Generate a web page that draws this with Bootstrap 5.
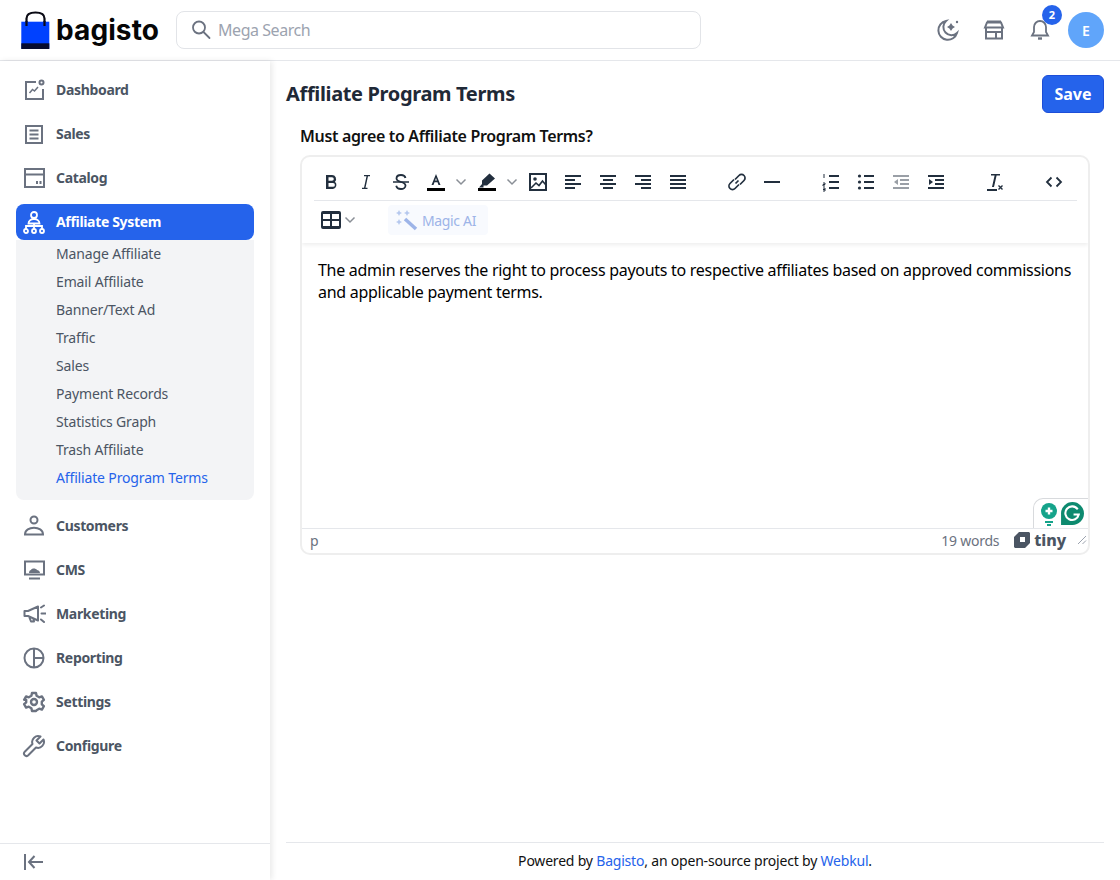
<!DOCTYPE html>
<html lang="en">
<head>
    <meta charset="UTF-8">
    <title>Affiliate Program Terms</title>
    <link href="https://cdn.jsdelivr.net/npm/bootstrap@5.3.0/dist/css/bootstrap.min.css" rel="stylesheet">
    <style>
        html, body { height: 100%; }
        body { font-family: "Noto Sans", sans-serif; color: #000; overflow: hidden; }
        .top-bar { height: 61px; padding: 0 16px 0 20px; border-bottom: 1px solid #e5e7eb; flex-shrink: 0; }
        .brand-row { width: 156px; gap: 6px; }
        .brand-name { font-family: Inter, sans-serif; font-weight: 700; font-size: 28px; letter-spacing: .1px; line-height: 1; color: #060606; }
        .mega-search { width: 525px; height: 38px; border: 1px solid #e2e4e8; border-radius: 8px; padding-left: 13px; gap: 6px; color: #9ca3af; font-size: 16px; letter-spacing: -.45px; }
        .top-icon { width: 46px; height: 36px; position: relative; }
        .notif-count { position: absolute; top: -7px; left: 25px; width: 20px; height: 20px; border-radius: 50%; background: #2563eb; color: #fff; font-size: 11px; font-weight: 700; }
        .user-circle { width: 36px; height: 36px; border-radius: 50%; background: #60a5fa; color: #fff; font-size: 14px; font-weight: 600; margin-left: 5px; }
        .side-panel { width: 270px; flex-shrink: 0; box-shadow: 2px 0 6px rgba(0,0,0,.09); position: relative; }
        .side-nav { padding: 11px 16px 0; flex-grow: 1; }
        .side-link { height: 36px; margin-bottom: 8px; padding-left: 6px; gap: 10px; color: #4b5563; font-size: 14px; font-weight: 700; letter-spacing: -.33px; border-radius: 8px; text-decoration: none; }
        .side-link svg { width: 24px; height: 24px; flex-shrink: 0; }
        .side-link span { position: relative; top: -1px; }
        .side-link.on { background: #2563eb; color: #fff; margin-bottom: 0; }
        .side-sub { background: #f3f4f6; border-radius: 0 0 8px 8px; padding: 0 0 8px 40px; margin-bottom: 8px; }
        .side-sub a { display: block; height: 28px; line-height: 28px; font-size: 14px; letter-spacing: -.15px; color: #4b5563; text-decoration: none; }
        .side-sub a.on { color: #2563eb; }
        .side-foot { height: 37px; border-top: 1px solid #e5e7eb; padding-left: 22px; margin-top: auto; }
        .page-area { padding: 0 16px; min-width: 0; }
        .page-head { height: 51px; margin-top: 14px; }
        .page-title { font-size: 20px; font-weight: 700; color: #1f2937; margin: 0; padding-top: 9px; line-height: 1; letter-spacing: -.35px; }
        .save-btn { width: 62px; height: 38px; padding: 0; background: #2563eb; border: 1px solid #1d4ed8; color: #fff; font-weight: 700; font-size: 16px; border-radius: 6px; }
        .terms-wrap { padding: 0 14px 0 14px; }
        .terms-label { font-size: 16px; font-weight: 600; color: #111; line-height: 20px; letter-spacing: -.34px; margin: 0 0 9px; }
        .tiny-box { height: 400px; border: 2px solid #eeeeee; border-radius: 10px; background: #fff; }
        .tiny-head { padding: 0 11px 0 12px; box-shadow: 0 2px 4px rgba(0,0,0,.07); position: relative; flex-shrink: 0; }
        .tool-row { height: 44px; padding-top: 6px; border-bottom: 1px solid #e5e7eb; }
        .tool-row2 { height: 42px; padding-bottom: 4px; }
        .tool-btn { width: 34px; height: 34px; margin-right: 1px; flex-shrink: 0; }
        .tool-btn svg, .tool-tri svg { display: block; }
        .tool-tri { width: 16px; height: 34px; margin-right: 1px; margin-left: -1px; flex-shrink: 0; }
        .tool-row2 .tool-tri { margin-left: -7px; }
        .tool-gap { width: 24px; flex-shrink: 0; }
        .magic-ai { width: 100px; height: 30px; margin-left: 29px; background: #f8fafe; border-radius: 4px; padding-left: 8px; gap: 4px; color: #9db4e8; font-size: 14px; letter-spacing: -.35px; }
        .tiny-body { padding: 16px; font-size: 16px; line-height: 22px; letter-spacing: -.28px; color: #000; position: relative; }
        .tiny-body p { margin: 0; }
        .gram-tab { position: absolute; right: 0; bottom: 0; width: 55px; height: 30px; background: #fff; border: 1px solid #d8dadd; border-right: 0; border-bottom: 0; border-radius: 10px 0 0 0; padding-left: 5px; gap: 1px; }
        .tiny-status { height: 25px; border-top: 1px solid #e5e7eb; padding: 0 1px 2px 8px; font-size: 14px; letter-spacing: -.25px; color: #6b7280; flex-shrink: 0; }
        .tiny-mark { font-weight: 800; font-size: 16px; letter-spacing: -.1px; color: #4b5563; line-height: 1; gap: 4px; margin-left: 15px; margin-right: 11px; }
        .page-foot { height: 38px; padding-bottom: 2px; border-top: 1px solid #e5e7eb; font-size: 14px; letter-spacing: -.2px; color: #111; margin-top: auto; }
        .page-foot a { color: #2563eb; text-decoration: none; }
    </style>
</head>
<body class="d-flex flex-column">
    <header class="top-bar d-flex align-items-center">
        <div class="brand-row d-flex align-items-center">
            <svg width="30" height="38" viewBox="0 0 30 38"><path d="M6.500 14V7.500C6.500 3.500 10 1.500 15.500 1.500S24.500 3.500 24.500 7.500V14" fill="none" stroke="#0a0a14" stroke-width="2.200"/><rect x="1.300" y="10.700" width="28" height="27" fill="#0041ff"/><rect x="1.300" y="32.300" width="28" height="5.700" fill="#060b2e"/><rect x="5.400" y="10" width="2.200" height="5" fill="#0a0a14"/><rect x="23.400" y="10" width="2.200" height="5" fill="#0a0a14"/></svg>
            <span class="brand-name">bagisto</span>
        </div>
        <div class="mega-search d-flex align-items-center">
            <svg width="22" height="22" viewBox="0 0 22 22" fill="none" stroke="#6b7280" stroke-width="1.800"><circle cx="9" cy="8.500" r="6"/><path d="M13.500 13l6 6" stroke-linecap="round"/></svg>
            <span>Mega Search</span>
        </div>
        <div class="d-flex align-items-center ms-auto">
            <div class="top-icon d-flex align-items-center justify-content-center">
                <svg width="24" height="24" viewBox="0 0 24 24" fill="none"><path d="M10 3a9.500 9.500 0 1 0 11 12 8 8 0 0 1-11-12z" stroke="#6b7280" stroke-width="2"/><path d="M15 5l1.600 2.400L19 9l-2.400 1.600L15 13l-1.600-2.400L11 9l2.400-1.600z" fill="#6b7280"/><circle cx="21" cy="4" r="1.200" fill="#6b7280"/></svg>
            </div>
            <div class="top-icon d-flex align-items-center justify-content-center">
                <svg width="22" height="20" viewBox="0 0 22 20" fill="none" stroke="#6b7280" stroke-width="2"><path d="M4 1.500h14M2 7.500l2-5h14l2 5zM3 7.500v11h16v-11M3 12h16M13 18.500V12"/></svg>
            </div>
            <div class="top-icon d-flex align-items-center justify-content-center">
                <svg width="20" height="24" viewBox="0 0 20 24" fill="none" stroke="#6b7280" stroke-width="1.800"><path d="M10 3a6 6 0 0 0-6 6v5l-2 3.500h16L16 14V9a6 6 0 0 0-6-6z"/><path d="M8 20.500h4" stroke-width="2.400"/></svg>
                <span class="notif-count d-flex align-items-center justify-content-center">2</span>
            </div>
            <div class="user-circle d-flex align-items-center justify-content-center">E</div>
        </div>
    </header>

    <div class="d-flex flex-grow-1" style="min-height:0">
        <aside class="side-panel d-flex flex-column">
            <nav class="side-nav">
                <a class="side-link d-flex align-items-center" href="#"><svg viewBox="0 0 24 24" fill="none" stroke="#6b7280" stroke-width="2"><path d="M14 4H4v17h17V11"/><path d="M7.500 15l3-3.500 2 1.500 3.500-4" stroke-width="1.500"/><circle cx="19.500" cy="4.500" r="2"/></svg><span>Dashboard</span></a>
                <a class="side-link d-flex align-items-center" href="#"><svg viewBox="0 0 24 24" fill="none" stroke="#6b7280" stroke-width="2"><path d="M4 4h16v17H4zM7.500 8.500h9M7.500 12.500h9M7.500 16.500h9"/></svg><span>Sales</span></a>
                <a class="side-link d-flex align-items-center" href="#"><svg viewBox="0 0 24 24" fill="none" stroke="#6b7280" stroke-width="2"><path d="M3 3h19v18H3zM3 8.500h19"/><path d="M15 15v3M18.500 15v3"/></svg><span>Catalog</span></a>
                <a class="side-link on d-flex align-items-center" href="#"><svg viewBox="0 0 24 24" fill="none" stroke="#fff" stroke-width="1.800"><circle cx="12" cy="5" r="3"/><path d="M6.500 13.500c0-6 11-6 11 0zM4 19v-3h16v3M12 13.500V19"/><circle cx="4" cy="21" r="2"/><circle cx="12" cy="21" r="2"/><circle cx="20" cy="21" r="2"/></svg><span>Affiliate System</span></a>
                <div class="side-sub">
                    <a href="#">Manage Affiliate</a>
                    <a href="#">Email Affiliate</a>
                    <a href="#">Banner/Text Ad</a>
                    <a href="#">Traffic</a>
                    <a href="#">Sales</a>
                    <a href="#">Payment Records</a>
                    <a href="#">Statistics Graph</a>
                    <a href="#">Trash Affiliate</a>
                    <a class="on" href="#">Affiliate Program Terms</a>
                </div>
                <a class="side-link d-flex align-items-center" href="#"><svg viewBox="0 0 24 24" fill="none" stroke="#6b7280" stroke-width="2"><circle cx="12" cy="6" r="3.500"/><path d="M3 20.500c0-9 18-9 18 0z"/></svg><span>Customers</span></a>
                <a class="side-link d-flex align-items-center" href="#"><svg viewBox="0 0 24 24" fill="none" stroke="#6b7280" stroke-width="2"><path d="M3 3.500h19v13H3zM7 20.500h11"/><path d="M7 15c0-2 1-3 2-3 .5-2 5-2 6 0 1 0 3 1 3 3z" fill="#6b7280" stroke="none"/></svg><span>CMS</span></a>
                <a class="side-link d-flex align-items-center" href="#"><svg viewBox="0 0 24 24" fill="none" stroke="#6b7280" stroke-width="2"><path d="M16 4.500L6 9H2.500v5H6l10 4.500zM7 14.500l2 5h3l-1-3.500" stroke-linejoin="round"/><path d="M19 5.500l3-2M19.500 11.500h4M19 17.500l3 2.500" stroke-linecap="round"/></svg><span>Marketing</span></a>
                <a class="side-link d-flex align-items-center" href="#"><svg viewBox="0 0 24 24" fill="none" stroke="#6b7280" stroke-width="2"><circle cx="12" cy="12" r="9.500"/><path d="M12 2.500v19M12 12h9.500"/></svg><span>Reporting</span></a>
                <a class="side-link d-flex align-items-center" href="#"><svg viewBox="0 0 24 24" fill="none" stroke="#6b7280" stroke-width="2.400"><circle cx="12" cy="12" r="3"/><path d="M10 3h4l.6 2.800 2.600 1.500 2.700-.9 2 3.400-2.100 1.900v2.600l2.100 1.900-2 3.400-2.700-.9-2.600 1.500L14 21h-4l-.6-2.800-2.600-1.500-2.700.9-2-3.400 2.100-1.900v-2.600L2.100 9.800l2-3.400 2.700.9 2.600-1.500z" stroke-linejoin="round"/></svg><span>Settings</span></a>
                <a class="side-link d-flex align-items-center" href="#"><svg viewBox="0 0 24 24" fill="none" stroke="#6b7280" stroke-width="2"><path d="M21.500 5.500l-4 4-3-3 4-4a6 6 0 0 0-8 7.500L2.500 18a2.500 2.500 0 0 0 3.500 3.500l8-8a6 6 0 0 0 7.500-8z" stroke-linejoin="round"/></svg><span>Configure</span></a>
            </nav>
            <div class="side-foot d-flex align-items-center">
                <svg width="24" height="24" viewBox="0 0 24 24" fill="none" stroke="#6b7280" stroke-width="2"><path d="M3 4v16M21 12H7M12.500 6L7 12l5.500 6"/></svg>
            </div>
        </aside>

        <main class="page-area d-flex flex-column flex-grow-1">
            <div class="page-head d-flex justify-content-between align-items-start">
                <h1 class="page-title">Affiliate Program Terms</h1>
                <button class="btn save-btn" type="button">Save</button>
            </div>
            <div class="terms-wrap">
                <p class="terms-label">Must agree to Affiliate Program Terms?</p>
                <div class="tiny-box d-flex flex-column overflow-hidden">
                    <div class="tiny-head">
                        <div class="tool-row d-flex align-items-center" id="toolRow1"></div>
                        <div class="tool-row2 d-flex align-items-center">
                            <div class="tool-btn d-flex align-items-center justify-content-center"><svg width="20" height="18" viewBox="0 0 20 18"><path fill-rule="evenodd" d="M2 0h16a2 2 0 0 1 2 2v14a2 2 0 0 1-2 2H2a2 2 0 0 1-2-2V2a2 2 0 0 1 2-2zM2 8h7V3H2zm9 0h7V3h-7zM2 15h7v-5H2zm9 0h7v-5h-7z" fill="#222f3e"/></svg></div>
                            <div class="tool-tri d-flex align-items-center justify-content-center"><svg width="12" height="8" viewBox="0 0 12 8" fill="none" stroke="#8a8f96" stroke-width="1.500"><path d="M1.500 1.500L6 6l4.500-4.500"/></svg></div>
                            <div class="magic-ai d-flex align-items-center">
                                <svg width="22" height="22" viewBox="0 0 22 22"><path d="M9 10l11 10" stroke="#9db4e8" stroke-width="3.500"/><path d="M3 1l1 2 2 1-2 1-1 2-1-2-2-1 2-1zM11 1l1 2 2 1-2 1-1 2-1-2-2-1 2-1zM3 10l1 2 2 1-2 1-1 2-1-2-2-1 2-1z" fill="#b6c8ee"/></svg>
                                <span>Magic AI</span>
                            </div>
                        </div>
                    </div>
                    <div class="tiny-body flex-grow-1">
                        <p>The admin reserves the right to process payouts to respective affiliates based on approved commissions and applicable payment terms.</p>
                        <div class="gram-tab d-flex align-items-center">
                            <svg width="20" height="24" viewBox="0 0 20 24"><circle cx="10" cy="9" r="8" fill="#15a38a"/><path d="M10 5.500v7M6.500 9h7" stroke="#fff" stroke-width="2.400"/><path d="M6 20h8M8 23h4" stroke="#15a38a" stroke-width="2"/></svg>
                            <svg width="25" height="25" viewBox="0 0 24 24"><path d="M12 1a11 11 0 0 1 0 22H1V12A11 11 0 0 1 12 1z" fill="#0d8a6f"/><path d="M17 8a6.500 6.500 0 1 0 1 5h-5" fill="none" stroke="#fff" stroke-width="2"/></svg>
                        </div>
                    </div>
                    <div class="tiny-status d-flex align-items-center">
                        <span>p</span>
                        <span class="ms-auto">19 words</span>
                        <span class="tiny-mark d-flex align-items-center">
                            <svg width="16" height="16" viewBox="0 0 16 16"><path fill-rule="evenodd" d="M5 0h10l1 1v10l-5 5H1l-1-1V5zM6 5v5h5V5z" fill="#4b5563"/></svg>tiny
                        </span>
                        <svg width="10" height="10" viewBox="0 0 10 10" stroke="#9ca3af" fill="none"><path d="M1 9l8-8M5.500 9L9 5.500"/></svg>
                    </div>
                </div>
            </div>
            <footer class="page-foot d-flex align-items-center justify-content-center">
                <span>Powered by <a href="#">Bagisto</a>, an open-source project by <a href="#">Webkul</a>.</span>
            </footer>
        </main>
    </div>

    <script>
        // editor toolbar, first row: each icon drawn on a 24px box
        const ink = '#222f3e';
        const lines = (rows, color = ink) => rows.map(r => `<rect x="${r[0]}" y="${r[1]}" width="${r[2]}" height="2" fill="${color}"/>`).join('');
        const icon = body => `<svg width="24" height="24" viewBox="0 0 24 24">${body}</svg>`;
        const tri = `<svg width="12" height="8" viewBox="0 0 12 8" fill="none" stroke="#8a8f96" stroke-width="1.500"><path d="M1.500 1.500L6 6l4.500-4.500"/></svg>`;
        const row1 = [
            {b: icon(`<path fill-rule="evenodd" d="M7 5h6a4 4 0 0 1 3 6.700A4.200 4.200 0 0 1 14 19H7zm2.500 2.200v3.600H13a1.800 1.800 0 0 0 0-3.600zm0 5.800v3.800H14a1.900 1.900 0 0 0 0-3.800z" fill="${ink}"/>`)},
            {b: icon(`<path d="M10 5h6v1.200h-2L11.500 17.800h2V19H8v-1.200h2L12.500 6.200H10z" fill="${ink}"/>`)},
            {b: icon(`<path d="M4 12h16" stroke="${ink}" stroke-width="1.600"/><path d="M16.500 8c-.5-2-2.300-3-4.500-3-2.800 0-4.500 1.500-4.500 3.500 0 4.500 9 2.500 9 7 0 2-2 3.500-4.500 3.500-2.500 0-4.300-1.200-4.800-3.200" fill="none" stroke="${ink}" stroke-width="1.800"/>`)},
            {b: icon(`<path d="M12 4l-4.500 11h2l1-2.800h3l1 2.800h2zm-.9 6.500L12 8l.9 2.500z" fill="${ink}" fill-rule="evenodd"/><rect x="3" y="18" width="18" height="3" fill="#000"/>`), t: 1},
            {b: icon(`<path d="M14.500 3.500l5.500 5L12 15.500H8.500v2H4l3-3.500V10.500z" fill="${ink}"/><rect x="3" y="18" width="18" height="3" fill="#000"/>`), t: 1},
            {b: icon(`<rect x="4" y="4" width="16" height="16" fill="none" stroke="${ink}" stroke-width="2"/><circle cx="9" cy="9" r="1.800" fill="${ink}"/><path d="M5 18l5-5 3 2.500 3.500-4.500 3 3.500" fill="none" stroke="${ink}" stroke-width="1.600"/>`)},
            {b: icon(lines([[4,5,16],[4,9,10],[4,13,16],[4,17,10]]))},
            {b: icon(lines([[4,5,16],[7,9,10],[4,13,16],[7,17,10]]))},
            {b: icon(lines([[4,5,16],[10,9,10],[4,13,16],[10,17,10]]))},
            {b: icon(lines([[4,5,16],[4,9,16],[4,13,16],[4,17,16]]))},
            {gap: 1},
            {b: icon(`<path d="M10.500 13.500l3-3M9 9.500l-4 4a3.500 3.500 0 0 0 5 5l4-4M15 14.500l4-4a3.500 3.500 0 0 0-5-5l-4 4" fill="none" stroke="${ink}" stroke-width="1.700"/>`)},
            {b: icon(lines([[4,11,16]]))},
            {gap: 1},
            {b: icon(lines([[10,5,10],[10,11,10],[10,17,10]]) + `<path d="M5 4v4M4 13h2v1.500H4V16h2M4 18h2v3H4M4 19.500h2" fill="none" stroke="${ink}" stroke-width="1"/>`)},
            {b: icon(lines([[10,5,10],[10,11,10],[10,17,10]]) + `<circle cx="5.500" cy="6" r="1.600" fill="${ink}"/><circle cx="5.500" cy="12" r="1.600" fill="${ink}"/><circle cx="5.500" cy="18" r="1.600" fill="${ink}"/>`)},
            {b: icon(lines([[4,5,16],[11,9,9],[11,13,9],[4,17,16]], '#9a9fa6') + `<path d="M9 9v6l-4-3z" fill="#9a9fa6"/>`)},
            {b: icon(lines([[4,5,16],[11,9,9],[11,13,9],[4,17,16]]) + `<path d="M5 9v6l4-3z" fill="${ink}"/>`)},
            {gap: 1},
            {b: icon(`<path d="M8 4h9v1.600h-3.400L11 17H9L11.600 5.600H8z" fill="${ink}"/><rect x="4" y="19" width="10" height="2" fill="${ink}"/><path d="M15.500 15.500l4 4M19.500 15.500l-4 4" stroke="${ink}" stroke-width="1.400"/>`)},
            {gap: 1},
            {b: icon(`<path d="M9.500 7.500L5 12l4.500 4.500M14.500 7.500L19 12l-4.500 4.500" fill="none" stroke="${ink}" stroke-width="1.800"/>`)}
        ];
        document.getElementById('toolRow1').innerHTML = row1.map(item => {
            if (item.gap) return '<div class="tool-gap"></div>';
            let html = `<div class="tool-btn d-flex align-items-center justify-content-center">${item.b}</div>`;
            if (item.t) html += `<div class="tool-tri d-flex align-items-center justify-content-center">${tri}</div>`;
            return html;
        }).join('');
    </script>
    <script src="https://cdn.jsdelivr.net/npm/bootstrap@5.3.0/dist/js/bootstrap.bundle.min.js"></script>
</body>
</html>
